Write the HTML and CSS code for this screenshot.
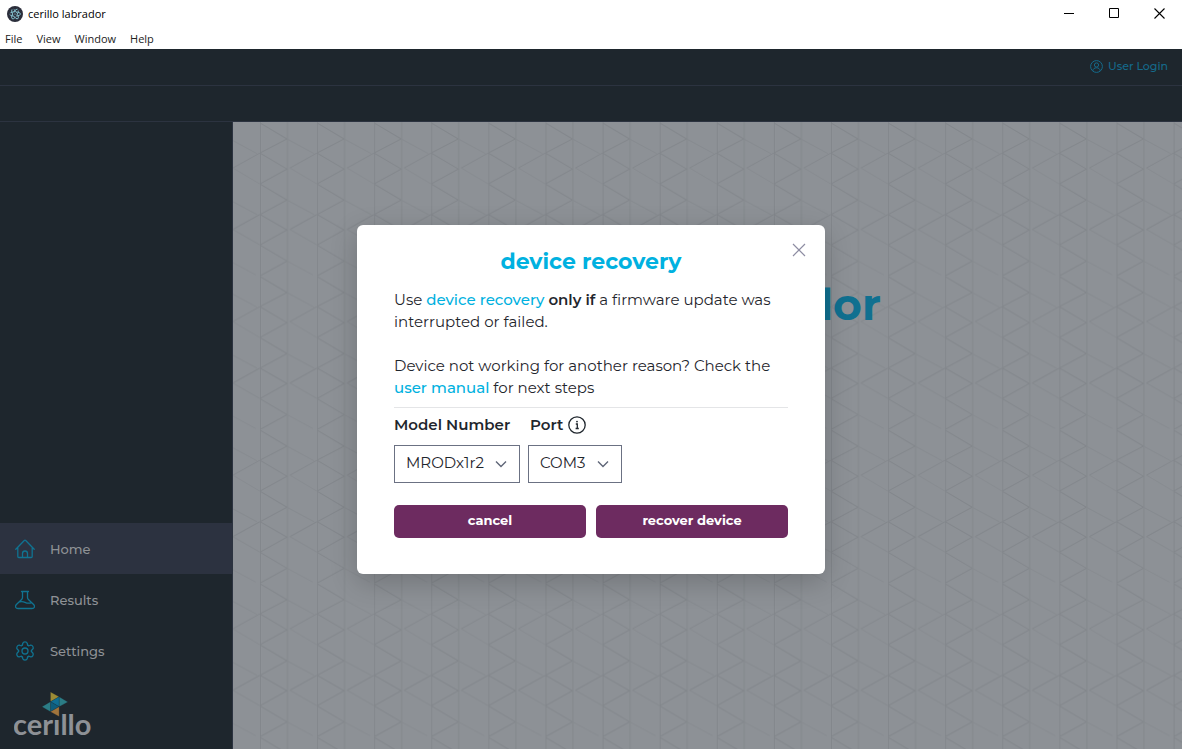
FILE: index.html
```html
<!DOCTYPE html>
<html lang="en">
<head>
  <meta charset="UTF-8">
  <meta name="viewport" content="width=device-width, initial-scale=1.0">
  <title>cerillo labrador</title>
  <link rel="stylesheet" href="styles.css">
</head>
<body>

  <!-- Window frame -->
  <div class="titlebar">
    <svg class="app-icon" width="16" height="16" viewBox="0 0 16 16" fill="none">
      <circle cx="8" cy="8" r="8" fill="#2b2e3b"/>
      <g stroke="#9feaf9" stroke-width=".7" stroke-dasharray="5 2">
        <ellipse cx="8" cy="8" rx="5.500" ry="2.200"/>
        <ellipse cx="8" cy="8" rx="5.500" ry="2.200" transform="rotate(60 8 8)"/>
        <ellipse cx="8" cy="8" rx="5.500" ry="2.200" transform="rotate(120 8 8)"/>
      </g>
      <circle cx="8" cy="8" r=".6" fill="#9feaf9"/>
    </svg>
    <span class="window-title">cerillo labrador</span>
    <div class="window-controls">
      <button class="window-btn" aria-label="Minimize">
        <svg width="11" height="11" viewBox="0 0 11 11"><path d="M0 5.5h10" stroke="#000"/></svg>
      </button>
      <button class="window-btn" aria-label="Maximize">
        <svg width="11" height="11" viewBox="0 0 11 11"><path d="M.5.5h9v9h-9z" fill="none" stroke="#000"/></svg>
      </button>
      <button class="window-btn" aria-label="Close">
        <svg width="11" height="11" viewBox="0 0 11 11"><path d="M.5.5l10 10M10.5.5l-10 10" stroke="#000" stroke-width="1.1"/></svg>
      </button>
    </div>
  </div>
  <nav class="menubar">
    <button class="menu-item">File</button>
    <button class="menu-item">View</button>
    <button class="menu-item">Window</button>
    <button class="menu-item">Help</button>
  </nav>

  <div class="app">
    <header class="topbar">
      <a class="login" href="#">
        <svg width="13" height="13" viewBox="0 0 13 13" fill="none" stroke="currentColor">
          <circle cx="6.5" cy="6.5" r="5.9"/>
          <circle cx="6.5" cy="5" r="2.1"/>
          <path d="M2.8 10.8c.3-2 1.6-3 3.7-3s3.400 1 3.700 3"/>
        </svg>
        User Login
      </a>
    </header>
    <div class="subbar"></div>

    <div class="layout">
      <aside class="sidebar">
        <nav class="side-nav">
          <a class="side-link active" href="#">
            <svg width="20" height="20" viewBox="0 0 20 20" fill="none" stroke="#107391" stroke-width="1.300" stroke-linecap="round" stroke-linejoin="round">
              <path d="M.8 10.300L9.300 1.500a1 1 0 0 1 1.400 0l8.500 8.800M2.800 8.500v9a1 1 0 0 0 1 1h12.400a1 1 0 0 0 1-1v-9M7.500 18.300v-3.800a2.500 2.500 0 0 1 5 0v3.800"/>
            </svg>
            Home
          </a>
          <a class="side-link" href="#">
            <svg width="20" height="20" viewBox="0 0 20 20" fill="none" stroke="#107391" stroke-width="1.300" stroke-linecap="round" stroke-linejoin="round">
              <path d="M6.500 1.500h7M7.500 1.500v6c0 .8-.3 1.400-.9 2L1.400 14.500c-1.800 2-.7 4 1.600 4h14c2.300 0 3.400-2 1.600-4l-5.200-5c-.6-.6-.9-1.200-.9-2v-6M4.200 12c2-.7 4-.6 5.800.3 2 1 4 1.200 6.200.5"/>
            </svg>
            Results
          </a>
          <a class="side-link" href="#">
            <svg width="20" height="20" viewBox="-10 -10 20 20" fill="none" stroke="#107391" stroke-width="1.300" stroke-linecap="round">
              <path id="tooth" d="M-3.300-5.700C-2.300-5.300-2.500-6.600-2.300-7.500Q-1.800-9.100 0-9.100T2.300-7.500C2.500-6.600 2.300-5.300 3.300-5.700"/>
              <use href="#tooth" transform="rotate(60)"/>
              <use href="#tooth" transform="rotate(120)"/>
              <use href="#tooth" transform="rotate(180)"/>
              <use href="#tooth" transform="rotate(240)"/>
              <use href="#tooth" transform="rotate(300)"/>
              <circle r="3"/>
            </svg>
            Settings
          </a>
        </nav>
        <svg class="logo" width="80" height="48" viewBox="0 0 80 48">
          <g stroke="#1e262d" stroke-width=".2">
            <path d="M36.500 0l8.600 4.800-8.600 4.900z" fill="#9c8b35"/>
            <path d="M45.100 4.800l8.700 5.100-8.700 4.800z" fill="#2b7c85"/>
            <path d="M36.500 9.700l8.600-4.900v9.900z" fill="#0f6e93"/>
            <path d="M36.500 9.700l8.600 5-8.600 5z" fill="#0e5d7c"/>
            <path d="M36.500 9.700v10L28 14.700z" fill="#2b7c85"/>
            <path d="M36.500 19.700l8.600-5v9.700z" fill="#a0743c"/>
          </g>
          <text class="logo-text" x="-1" y="43">cerıllo</text>
        </svg>
      </aside>

      <main class="content">
        <svg class="backdrop-pattern" width="100%" height="100%" aria-hidden="true">
          <defs>
            <pattern id="triangles" x="27" y="0" width="57.100" height="153.600" patternUnits="userSpaceOnUse">
              <g fill="none" stroke="#82868b">
                <path d="M.5 0v154M27.500 0v154" stroke="#83878c"/>
                <path d="M0 1l27 16L0 31l27 16L0 62l27 16L0 92.500l27 15.500L0 123l27 16L0 154"/>
                <path d="M57 31L30 46M57 92.500L30 107.500"/>
                <path d="M27 17l27 14.500M30 46l27 16M27 78l27 14.500M30 107.500l27 15.500M27 139l26 14" stroke="#868a8f"/>
              </g>
            </pattern>
          </defs>
          <rect width="100%" height="100%" fill="url(#triangles)"/>
        </svg>
        <h1 class="hero">cerillo labrador</h1>
      </main>
    </div>

    <!-- Device recovery modal -->
    <div class="overlay">
      <section class="modal" role="dialog" aria-labelledby="modal-title">
        <button class="close-btn" aria-label="Close dialog">
          <svg width="14" height="14" viewBox="0 0 14 14"><path d="M1 1l12 12M13 1L1 13" stroke="#8e8da3" stroke-width="1.200"/></svg>
        </button>
        <h2 class="modal-title" id="modal-title">device recovery</h2>
        <p class="modal-text">Use <a href="#">device recovery</a> <strong>only if</strong> a firmware update was interrupted or failed.</p>
        <p class="modal-text">Device not working for another reason? Check the <a href="#">user manual</a> for next steps</p>

        <form class="recovery-form">
          <div class="fields">
            <div class="field field-model">
              <label for="model">Model Number</label>
              <div class="select-wrap">
                <select id="model"><option>MRODx1r2</option></select>
                <svg class="chevron" width="12" height="8" viewBox="0 0 12 8"><path d="M1 1.500l5 5 5-5" fill="none" stroke="#5f6678" stroke-width="1.400"/></svg>
              </div>
            </div>
            <div class="field field-port">
              <label for="port">Port
                <svg width="18" height="18" viewBox="0 0 18 18" fill="none" stroke="#1f262d" stroke-width="1.300">
                  <circle cx="9" cy="9" r="8.200"/>
                  <path d="M7.800 8H9.300v4.500M7.600 12.500h3.200"/>
                  <circle cx="9" cy="5.600" r=".9" fill="#1f262d" stroke="none"/>
                </svg>
              </label>
              <div class="select-wrap">
                <select id="port"><option>COM3</option></select>
                <svg class="chevron" width="12" height="8" viewBox="0 0 12 8"><path d="M1 1.500l5 5 5-5" fill="none" stroke="#5f6678" stroke-width="1.400"/></svg>
              </div>
            </div>
          </div>
          <div class="actions">
            <button type="button" class="btn">cancel</button>
            <button type="button" class="btn">recover device</button>
          </div>
        </form>
      </section>
    </div>
  </div>

</body>
</html>
```
FILE: styles.css
```css
* {
  box-sizing: border-box;
}

body {
  margin: 0;
  min-height: 100vh;
  display: flex;
  flex-direction: column;
  font-family: Montserrat, Inter, sans-serif;
  color: #1f262d;
  background: #fff;
}

button {
  font-family: inherit;
  border: none;
  cursor: pointer;
}

a {
  text-decoration: none;
}

svg {
  flex-shrink: 0;
}

/* Window frame */
.titlebar {
  display: flex;
  align-items: center;
  height: 27px;
  padding-left: 7px;
  font-family: "Segoe UI", "Open Sans", sans-serif;
  font-size: 11px;
  color: #000;
}

.window-title {
  margin-left: 5px;
}

.window-controls {
  display: flex;
  margin-left: auto;
}

.window-btn {
  display: flex;
  align-items: center;
  justify-content: center;
  width: 45px;
  height: 27px;
  padding: 0;
  background: none;
}

.menubar {
  display: flex;
  gap: 14px;
  height: 22px;
  padding-left: 5px;
}

.menu-item {
  padding: 0;
  background: none;
  font-family: "Segoe UI", "Open Sans", sans-serif;
  font-size: 11px;
  color: #222;
}

/* App shell */
.app {
  position: relative;
  flex: 1;
  display: flex;
  flex-direction: column;
  background: #1e262d;
}

.topbar {
  display: flex;
  justify-content: flex-end;
  height: 37px;
  padding: 0 14px 2px;
  border-bottom: 1px solid #2c3340;
}

.login {
  display: flex;
  align-items: center;
  gap: 5px;
  font-size: 11px;
  font-weight: 500;
  color: #156a8b;
}

.subbar {
  height: 36px;
  border-bottom: 1px solid #2c3340;
}

.layout {
  flex: 1;
  display: flex;
}

.sidebar {
  display: flex;
  flex-direction: column;
  justify-content: flex-end;
  width: 233px;
  padding-bottom: 9px;
  border-right: 1px solid #2c3340;
}

.side-nav {
  display: flex;
  flex-direction: column;
}

.side-link {
  display: flex;
  align-items: center;
  gap: 15px;
  height: 51px;
  padding-left: 15px;
  font-size: 13px;
  font-weight: 500;
  color: #8f9296;
}

.side-link.active {
  background: #2c3240;
}

.logo {
  margin: 16px 0 0 14px;
}

.logo-text {
  font-family: Lato, sans-serif;
  font-size: 29px;
  font-weight: 700;
  fill: #8e9196;
}

.content {
  position: relative;
  flex: 1;
  background: #8d9196;
}

.backdrop-pattern {
  position: absolute;
  inset: 0;
}

.hero {
  position: relative;
  margin: 152px 0 0;
  font-size: 44px;
  line-height: 60px;
  font-weight: 700;
  text-align: center;
  color: #107090;
}

/* Modal */
.overlay {
  position: absolute;
  inset: 0;
  display: flex;
  align-items: center;
  justify-content: center;
}

.modal {
  position: relative;
  width: 468px;
  padding: 23px 37px 36px;
  border-radius: 6px;
  background: #fff;
  box-shadow: 0 8px 28px rgba(0, 0, 0, 0.2);
}

.close-btn {
  position: absolute;
  top: 18px;
  right: 19px;
  display: flex;
  padding: 0;
  background: none;
}

.modal-title {
  margin: 0 0 13px;
  font-size: 22px;
  line-height: 28px;
  font-weight: 700;
  text-align: center;
  color: #00b1e0;
}

.modal-text {
  margin: 0 0 22px;
  font-size: 15px;
  line-height: 22px;
}

.modal-text a {
  font-weight: 500;
  color: #00b1e0;
}

.modal-text strong {
  font-weight: 600;
}

.modal-text + .recovery-form {
  margin-top: -14px;
}

.recovery-form {
  border-top: 1px solid #e4e5e7;
}

.fields {
  display: flex;
  gap: 8px;
  padding-top: 6px;
}

.field label {
  display: flex;
  align-items: center;
  gap: 5px;
  height: 22px;
  margin-bottom: 9px;
  font-size: 15px;
  font-weight: 600;
}

.field-port label {
  padding-left: 2px;
}

.select-wrap {
  position: relative;
}

.field select {
  appearance: none;
  width: 100%;
  height: 38px;
  padding: 0 11px 2px;
  border: 1px solid #6b7183;
  border-radius: 0;
  background: #fff;
  font-family: inherit;
  font-size: 15px;
  color: #1f262d;
}

.field-model {
  width: 126px;
}

.field-port {
  width: 94px;
}

.chevron {
  position: absolute;
  top: 15px;
  right: 13px;
  pointer-events: none;
}

.actions {
  display: flex;
  gap: 10px;
  margin-top: 22px;
}

.btn {
  flex: 1;
  height: 33px;
  padding: 0 0 2px;
  border-radius: 5px;
  background: #6d2b60;
  font-size: 13px;
  font-weight: 700;
  color: #fff;
}
```
